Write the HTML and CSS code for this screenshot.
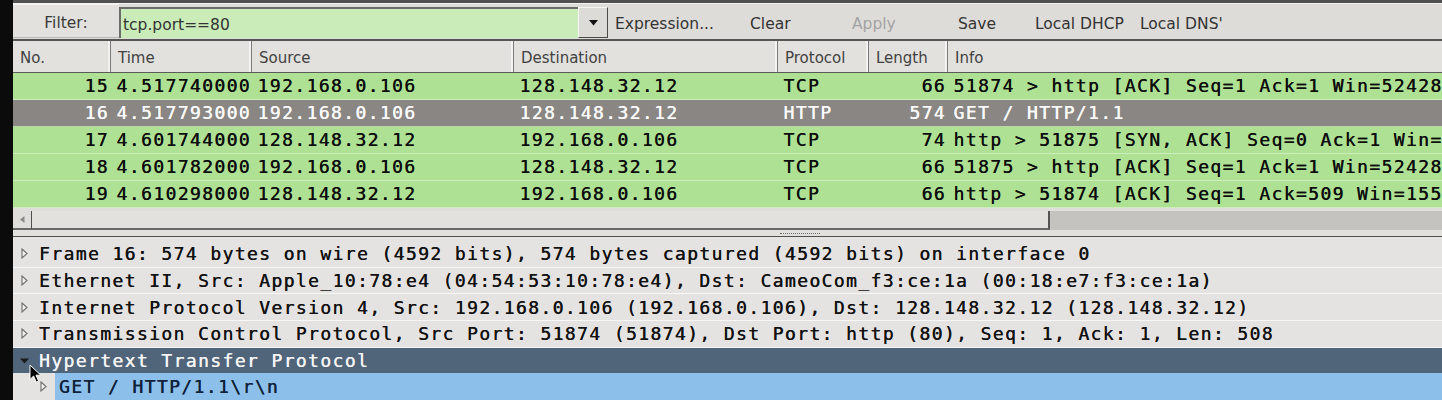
FILE: index.html
```html
<!DOCTYPE html>
<html>
<head>
<meta charset="utf-8">
<title>Wireshark - tcp.port==80</title>
<link rel="stylesheet" href="styles.css">
</head>
<body>
<div class="app">
  <div class="edge"></div>
  <div class="main">
    <div class="topline"></div>
    <div class="filterbar">
      <div class="flabel">Filter:</div>
      <div class="finput">tcp.port==80</div>
      <div class="fdrop"><svg width="9" height="6" viewBox="0 0 9 6"><polygon points="0,0 9,0 4.5,5.5" fill="#111"/></svg></div>
      <div class="fbtn b-expr">Expression...</div>
      <div class="fbtn b-clear">Clear</div>
      <div class="fbtn b-apply">Apply</div>
      <div class="fbtn b-save">Save</div>
      <div class="fbtn b-dhcp">Local DHCP</div>
      <div class="fbtn b-dns">Local DNS'</div>
    </div>

    <div class="phead">
      <div class="hc">No.</div>
      <div class="hc">Time</div>
      <div class="hc">Source</div>
      <div class="hc">Destination</div>
      <div class="hc">Protocol</div>
      <div class="hc">Length</div>
      <div class="hc last">Info</div>
    </div>
    <div class="prow">
      <span class="r">15</span><span>4.517740000</span><span>192.168.0.106</span><span>128.148.32.12</span><span>TCP</span><span class="r">66</span><span>51874 &gt; http [ACK] Seq=1 Ack=1 Win=52428</span>
    </div>
    <div class="prow selected">
      <span class="r">16</span><span>4.517793000</span><span>192.168.0.106</span><span>128.148.32.12</span><span>HTTP</span><span class="r">574</span><span>GET / HTTP/1.1</span>
    </div>
    <div class="prow">
      <span class="r">17</span><span>4.601744000</span><span>128.148.32.12</span><span>192.168.0.106</span><span>TCP</span><span class="r">74</span><span>http &gt; 51875 [SYN, ACK] Seq=0 Ack=1 Win=</span>
    </div>
    <div class="prow">
      <span class="r">18</span><span>4.601782000</span><span>192.168.0.106</span><span>128.148.32.12</span><span>TCP</span><span class="r">66</span><span>51875 &gt; http [ACK] Seq=1 Ack=1 Win=52428</span>
    </div>
    <div class="prow">
      <span class="r">19</span><span>4.610298000</span><span>128.148.32.12</span><span>192.168.0.106</span><span>TCP</span><span class="r">66</span><span>http &gt; 51874 [ACK] Seq=1 Ack=509 Win=155</span>
    </div>

    <div class="gap"></div>
    <div class="hscroll">
      <div class="sbtn"><svg width="5" height="7" viewBox="0 0 5 7"><polygon points="4.5,0 0,3.5 4.5,7" fill="#8a8a8a"/></svg></div>
      <div class="sthumb"></div>
    </div>
    <div class="divider"><div class="grip"></div></div>
    <div class="sepline"></div>

    <div class="details">
      <div class="drow">
        <span class="tw"><svg width="7" height="11" viewBox="0 0 7 11"><polygon points="1,1 6,5.5 1,10" fill="#f2f2f2" stroke="#6e6e6e" stroke-width="1.1"/></svg></span>
        <span class="dt">Frame 16: 574 bytes on wire (4592 bits), 574 bytes captured (4592 bits) on interface 0</span>
      </div>
      <div class="drow">
        <span class="tw"><svg width="7" height="11" viewBox="0 0 7 11"><polygon points="1,1 6,5.5 1,10" fill="#f2f2f2" stroke="#6e6e6e" stroke-width="1.1"/></svg></span>
        <span class="dt">Ethernet II, Src: Apple_10:78:e4 (04:54:53:10:78:e4), Dst: CameoCom_f3:ce:1a (00:18:e7:f3:ce:1a)</span>
      </div>
      <div class="drow">
        <span class="tw"><svg width="7" height="11" viewBox="0 0 7 11"><polygon points="1,1 6,5.5 1,10" fill="#f2f2f2" stroke="#6e6e6e" stroke-width="1.1"/></svg></span>
        <span class="dt">Internet Protocol Version 4, Src: 192.168.0.106 (192.168.0.106), Dst: 128.148.32.12 (128.148.32.12)</span>
      </div>
      <div class="drow">
        <span class="tw"><svg width="7" height="11" viewBox="0 0 7 11"><polygon points="1,1 6,5.5 1,10" fill="#f2f2f2" stroke="#6e6e6e" stroke-width="1.1"/></svg></span>
        <span class="dt">Transmission Control Protocol, Src Port: 51874 (51874), Dst Port: http (80), Seq: 1, Ack: 1, Len: 508</span>
      </div>
      <div class="drow open">
        <span class="tw"><svg width="9" height="6" viewBox="0 0 9 6"><polygon points="0,0.5 9,0.5 4.5,5.5" fill="#1c1c1c"/></svg></span>
        <span class="dt">Hypertext Transfer Protocol</span>
      </div>
      <div class="drow child">
        <span class="tw tw2"><svg width="7" height="11" viewBox="0 0 7 11"><polygon points="1,1 6,5.5 1,10" fill="#f2f2f2" stroke="#6e6e6e" stroke-width="1.1"/></svg></span>
        <span class="dt sel">GET / HTTP/1.1\r\n</span>
      </div>
    </div>
  </div>
</div>
<svg class="cursor" width="14" height="20" viewBox="0 0 14 20">
  <path d="M1 1 L1 15.5 L4.6 12 L7.2 18 L9.6 17 L7 11.2 L11.8 11.2 Z" fill="#000" stroke="#fff" stroke-width="1" stroke-linejoin="round"/>
</svg>
</body>
</html>
```

FILE: styles.css
```css
html, body {
  margin: 0;
  padding: 0;
  height: 400px;
  overflow: hidden;
  background: #dcdad6;
}

.app {
  display: flex;
  height: 400px;
}

.edge {
  width: 13px;
  flex: none;
  background: #0b0b0b;
}

.main {
  flex: 1;
  min-width: 0;
  display: flex;
  flex-direction: column;
  overflow: hidden;
}

.topline {
  height: 3px;
  background: #505050;
  border-bottom: 1px solid #f2f2f2;
  flex: none;
}

/* ---------- filter toolbar ---------- */
.filterbar {
  flex: none;
  height: 35px;
  display: flex;
  align-items: stretch;
  background: #dedcd9;
  border-bottom: 2px solid #555;
  font-family: "DejaVu Sans", sans-serif;
  font-size: 15.5px;
  color: #333;
}

.flabel {
  width: 106px;
  flex: none;
  box-sizing: border-box;
  display: flex;
  align-items: center;
  justify-content: center;
  padding-top: 4px;
  color: #3a3a3a;
  background: #e3e1de;
  border-top: 1px solid #f4f4f4;
  border-bottom: 1px solid #b9b7b4;
  margin-bottom: 1px;
}

.finput {
  width: 459px;
  flex: none;
  box-sizing: border-box;
  margin: 3px 0 1px 0;
  padding: 2px 0 0 2px;
  display: flex;
  align-items: center;
  background: #c9ecb9;
  border-top: 2px solid #6c6c6c;
  border-left: 2px solid #6c6c6c;
  color: #333;
}

.fdrop {
  width: 30px;
  flex: none;
  box-sizing: border-box;
  margin: 3px 0 1px 0;
  display: flex;
  align-items: center;
  justify-content: center;
  background: #dddbd8;
  border-top: 1px solid #f5f5f5;
  border-left: 1px solid #f5f5f5;
  border-right: 1px solid #4a4a4a;
  border-bottom: 1px solid #4a4a4a;
}

.fbtn {
  flex: none;
  display: flex;
  align-items: center;
  padding-top: 4px;
  white-space: nowrap;
}

.b-expr { margin-left: 7px; width: 135px; }
.b-clear { width: 102px; }
.b-apply { width: 106px; color: #a3a3a3; }
.b-save { width: 77px; }
.b-dhcp { width: 105px; }
.b-dns { width: auto; }

/* ---------- packet list ---------- */
.phead,
.prow {
  display: grid;
  grid-template-columns: 98px 141px 262px 264px 91px 79px 1fr;
  flex: none;
}

.phead {
  height: 32px;
  box-sizing: border-box;
  background: #e3e1de;
  border-bottom: 1px solid #5a5a5a;
  font-family: "DejaVu Sans", sans-serif;
  font-size: 15px;
  color: #414141;
}

.hc {
  display: flex;
  align-items: center;
  padding: 3px 0 0 7px;
  border-right: 1px solid #7a7a7a;
  box-shadow: inset -2px 0 0 #f3f3f3;
  white-space: nowrap;
  overflow: hidden;
}

.hc.last {
  border-right: 0;
  box-shadow: none;
}

.prow {
  height: 27px;
  box-sizing: border-box;
  background: #aee193;
  border-bottom: 1px solid #cdeebc;
  font-family: "DejaVu Sans Mono", monospace;
  font-size: 18px;
  letter-spacing: 1.39px;
  line-height: 26px;
  color: #0d0d0d;
  text-shadow: 0.35px 0 0 currentColor;
}

.prow > span {
  padding-left: 5.5px;
  white-space: nowrap;
  overflow: hidden;
}

.prow > span.r {
  padding-left: 0;
  padding-right: 2px;
  text-align: right;
}

.prow.selected {
  background: #8a8683;
  border-bottom-color: #b9d6a9;
  color: #fafafa;
}

.gap {
  height: 3px;
  flex: none;
  background: #e0dedb;
}

.hscroll {
  height: 19px;
  flex: none;
  display: flex;
  background: #c5c3c0;
}

.sbtn {
  width: 19px;
  flex: none;
  box-sizing: border-box;
  display: flex;
  align-items: center;
  justify-content: center;
  background: #e0dedb;
  border-right: 1px solid #4f4f4f;
  border-bottom: 2px solid #6a6a6a;
}

.sthumb {
  width: 1018px;
  flex: none;
  box-sizing: border-box;
  background: #e3e1de;
  border-right: 2px solid #555;
  border-bottom: 2px solid #6a6a6a;
}

.divider {
  height: 6px;
  flex: none;
  background: #e2e0dd;
  display: flex;
  align-items: center;
}

.grip {
  margin-left: 767px;
  width: 40px;
  border-top: 1px dotted #6d6d6d;
}

.sepline {
  height: 1px;
  flex: none;
  background: #505050;
  border-bottom: 3px solid #e6e4e2;
}

/* ---------- packet details ---------- */
.details {
  flex: 1;
  display: flex;
  flex-direction: column;
  font-family: "DejaVu Sans Mono", monospace;
  font-size: 18px;
  letter-spacing: 1.39px;
  color: #121212;
  text-shadow: 0.35px 0 0 currentColor;
}

.drow {
  height: 26.7px;
  flex: none;
  box-sizing: border-box;
  display: flex;
  align-items: stretch;
  background: #e5e3e1;
  border-top: 1px solid #f7f7f7;
  white-space: nowrap;
}

.drow:first-child {
  border-top: 0;
}

.tw {
  width: 22px;
  flex: none;
  display: flex;
  align-items: center;
  justify-content: center;
}

.dt {
  padding-left: 4px;
  display: flex;
  align-items: center;
}

.drow.open {
  background: #50657a;
  color: #f4f4f4;
}

.drow.child {
  border-top: 0;
}

.tw2 {
  width: 42px;
  box-sizing: border-box;
  justify-content: flex-end;
  padding-right: 8px;
}

.dt.sel {
  flex: 1;
  padding-left: 4px;
  background: #8cc0ea;
  color: #10223a;
}

.cursor {
  position: absolute;
  left: 29px;
  top: 364px;
}
```
